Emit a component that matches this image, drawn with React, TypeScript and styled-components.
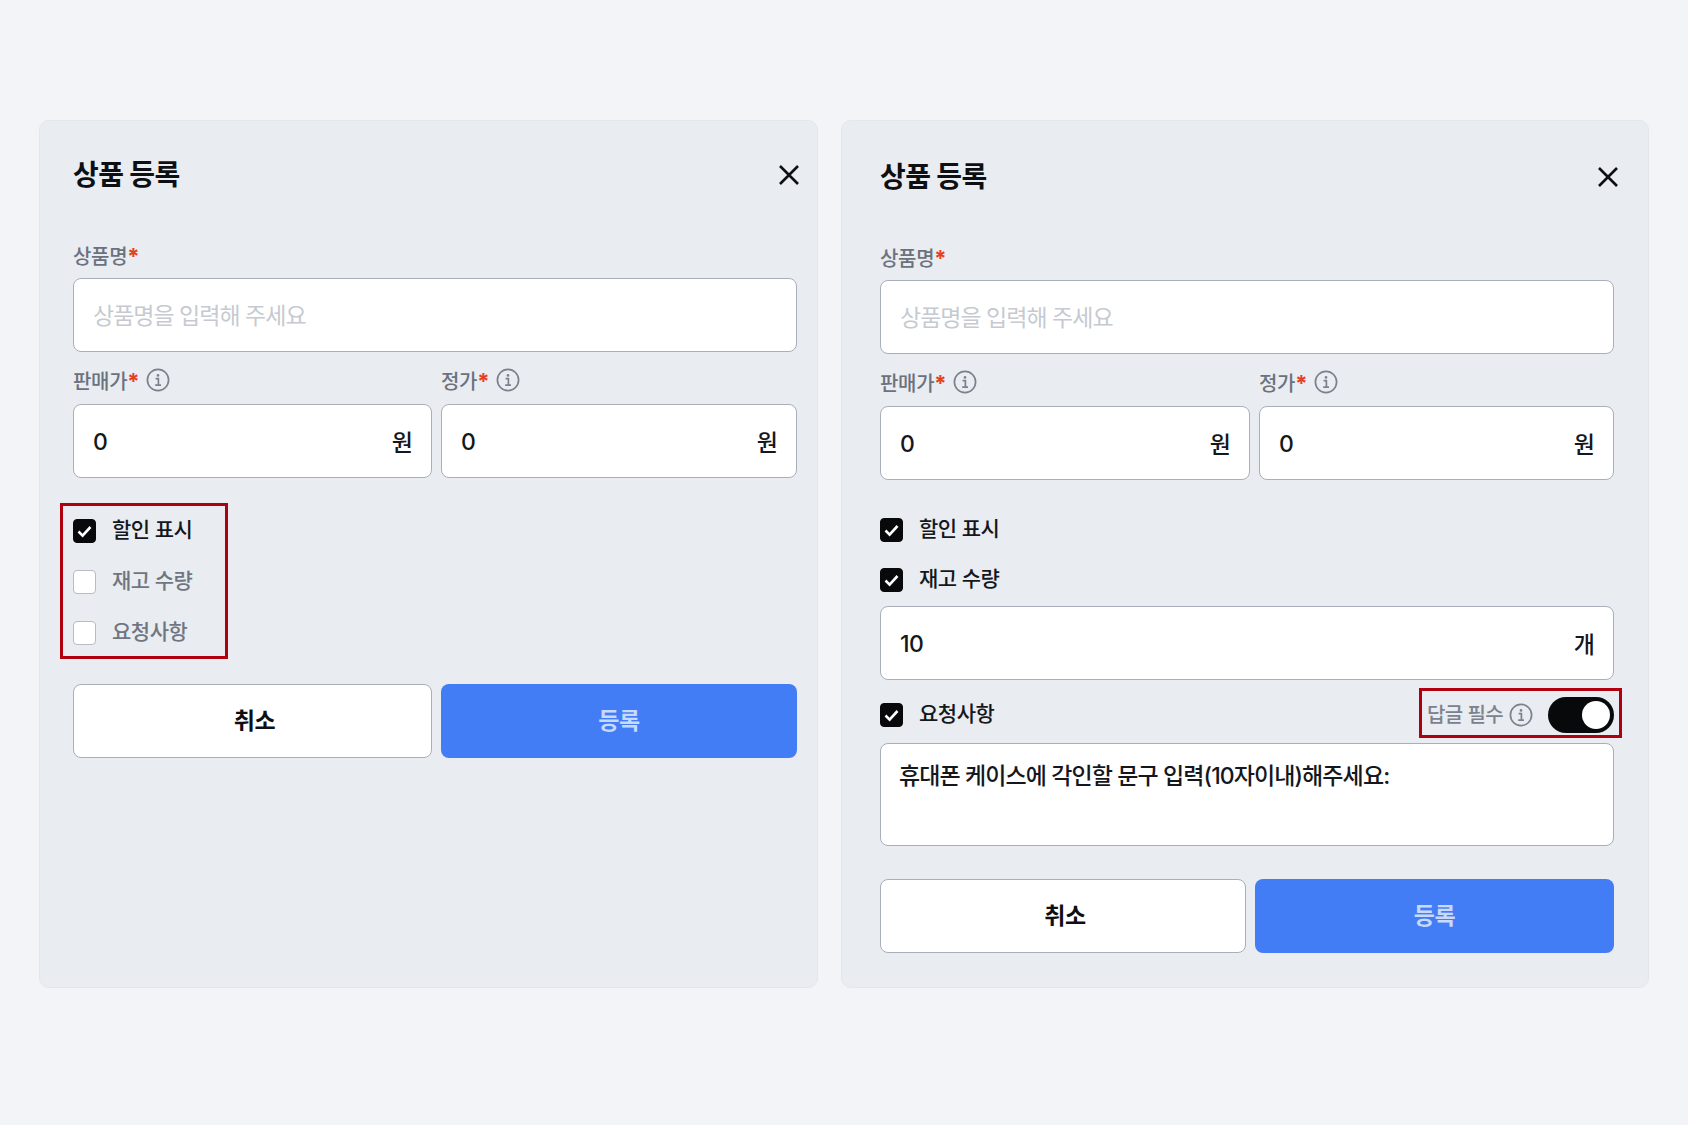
import React from 'react';
import styled, { createGlobalStyle } from 'styled-components';

const GlobalStyle = createGlobalStyle`
    * {
        box-sizing: border-box;
    }

    body {
        margin: 0;
        background: #f2f4f7;
        font-family: Inter, 'Noto Sans CJK KR', sans-serif;
    }
`;

const Page = styled.div`
    display: flex;
    align-items: flex-start;
    gap: 23px;
    width: 1688px;
    height: 1125px;
    padding: 120px 40px 0 39px;
    overflow: hidden;
`;

const Card = styled.section<{ $width: number; $top: number; $left: number; $right: number }>`
    width: ${(p) => p.$width}px;
    height: 868px;
    padding: ${(p) => p.$top}px ${(p) => p.$right}px 0 ${(p) => p.$left}px;
    flex: none;
    background: #e9ecf0;
    border: 1px solid #e3e6ea;
    border-radius: 10px;
`;

const Header = styled.div`
    display: flex;
    align-items: center;
    justify-content: space-between;
    height: 42px;
    margin-bottom: 46px;
`;

const Title = styled.h2`
    margin: 0 0 4px;
    font-size: 28px;
    font-weight: 700;
    letter-spacing: -0.6px;
    color: #0d0f12;
`;

const CloseButton = styled.button<{ $out: number }>`
    display: flex;
    padding: 0;
    margin-right: -${(p) => p.$out}px;
    background: none;
    border: none;
    color: #0d0f12;
`;

const FieldLabel = styled.div`
    display: flex;
    align-items: center;
    gap: 7px;
    height: 26px;
    margin-bottom: 10px;
    font-size: 20px;
    font-weight: 500;
    letter-spacing: -0.3px;
    color: #6b727e;
`;

const Required = styled.span`
    color: #e5401d;
    font-size: 22px;
    font-weight: 700;
    line-height: 1;
`;

const InfoMark = styled.svg`
    flex: none;
    width: 24px;
    height: 24px;
    color: #7b828e;
`;

const InputBox = styled.div`
    display: flex;
    align-items: center;
    height: 74px;
    padding: 0 18px 0 19px;
    background: #fff;
    border: 1.5px solid #a8afba;
    border-radius: 8px;
`;

const TextInput = styled.input`
    flex: 1;
    min-width: 0;
    padding: 2px 0 0;
    background: none;
    border: none;
    outline: none;
    font: inherit;
    font-size: 23px;
    font-weight: 500;
    letter-spacing: -0.6px;
    color: #14171c;

    &::placeholder {
        color: #c6cad0;
        font-weight: 400;
        letter-spacing: -1px;
        opacity: 1;
    }
`;

const Unit = styled.span`
    font-size: 23px;
    font-weight: 500;
    color: #14171c;
`;

const Columns = styled.div<{ $first: number }>`
    display: grid;
    grid-template-columns: ${(p) => p.$first}px minmax(0, 1fr);
    column-gap: 9px;
`;

const PriceRow = styled(Columns)`
    margin-top: 16px;

    ${FieldLabel} {
        margin: -1px 0 11px;
    }
`;

const Actions = styled(Columns)<{ $gap: number }>`
    margin-top: ${(p) => p.$gap}px;
`;

const CancelButton = styled.button`
    height: 74px;
    padding: 0 0 4px 4px;
    background: #fff;
    border: 1.5px solid #a8afba;
    border-radius: 8px;
    font: inherit;
    font-size: 23px;
    font-weight: 700;
    letter-spacing: -0.5px;
    color: #0d0f12;
`;

const SubmitButton = styled.button`
    height: 74px;
    padding: 0 0 4px;
    background: #437df5;
    border: none;
    border-radius: 8px;
    font: inherit;
    font-size: 23px;
    font-weight: 700;
    letter-spacing: -0.5px;
    color: #c7d9fc;
`;

const CheckList = styled.div`
    display: flex;
    flex-direction: column;
    gap: 27px;
    width: 168px;
    margin: 25px 0 0 -13px;
    padding: 13px 0 11px 10px;
    border: 3px solid #b0000f;
`;

const CheckRow = styled.label<{ $top?: number }>`
    display: flex;
    align-items: center;
    gap: 16px;
    height: 24px;
    margin-top: ${(p) => p.$top ?? 0}px;
`;

const CheckBox = styled.span<{ $on?: boolean }>`
    display: flex;
    align-items: center;
    justify-content: center;
    flex: none;
    width: 23px;
    height: 24px;
    background: ${(p) => (p.$on ? '#08090b' : '#fff')};
    border: 1.5px solid ${(p) => (p.$on ? '#08090b' : '#b6bbc4')};
    border-radius: 4px;
    color: #fff;
`;

const CheckText = styled.span<{ $on?: boolean }>`
    margin-top: -6px;
    font-size: 21px;
    font-weight: 500;
    letter-spacing: -0.5px;
    color: ${(p) => (p.$on ? '#14171c' : '#6f7682')};
`;

const StockBox = styled(InputBox)`
    margin-top: 14px;
`;

const RequestRow = styled.div`
    display: flex;
    align-items: center;
    justify-content: space-between;
    height: 50px;
    margin-top: 8px;
`;

const ReplyGroup = styled.div`
    display: flex;
    align-items: center;
    height: 50px;
    margin-right: -8px;
    padding: 4px 5px 0;
    border: 3px solid #b0000f;
`;

const ReplyText = styled.span`
    margin: -4px 6px 0 0;
    font-size: 20px;
    font-weight: 500;
    letter-spacing: -0.6px;
    color: #7b828e;
`;

const Toggle = styled.span`
    display: flex;
    justify-content: flex-end;
    align-items: center;
    width: 66px;
    height: 36px;
    margin-left: 15px;
    padding-right: 4px;
    background: #08090b;
    border-radius: 18px;
`;

const Knob = styled.span`
    width: 28px;
    height: 28px;
    background: #fff;
    border-radius: 50%;
`;

const Notes = styled.textarea`
    display: block;
    width: 100%;
    height: 103px;
    margin-top: 5px;
    padding: 17px 18px;
    background: #fff;
    border: 1.5px solid #a8afba;
    border-radius: 8px;
    outline: none;
    resize: none;
    font: inherit;
    font-size: 23px;
    font-weight: 500;
    line-height: 30px;
    letter-spacing: -0.9px;
    color: #14171c;
`;

const InfoIcon = () => (
    <InfoMark viewBox="0 0 24 24" fill="none" stroke="currentColor" strokeWidth="1.7">
        <circle cx="12" cy="12" r="10.6" />
        <circle cx="12" cy="7.4" r="1.3" fill="currentColor" stroke="none" />
        <path d="M9.6 10.7H12.4V17M9.2 17.2H15" />
    </InfoMark>
);

const CloseIcon = () => (
    <svg width="24" height="24" viewBox="0 0 24 24" fill="none" stroke="currentColor" strokeWidth="2.6">
        <path d="M3 3L21 21M21 3L3 21" />
    </svg>
);

const Check = ({ on }: { on?: boolean }) => (
    <CheckBox $on={on}>
        {on && (
            <svg width="15" height="13" viewBox="0 0 15 13" fill="none" stroke="currentColor" strokeWidth="2.6">
                <path d="M1.5 6.5L5.6 10.6L13.5 2" />
            </svg>
        )}
    </CheckBox>
);

const Heading = ({ closeOut }: { closeOut: number }) => (
    <Header>
        <Title>상품 등록</Title>
        <CloseButton $out={closeOut}>
            <CloseIcon />
        </CloseButton>
    </Header>
);

const NameField = () => (
    <>
        <FieldLabel>
            <span>
                상품명<Required>*</Required>
            </span>
        </FieldLabel>
        <InputBox>
            <TextInput placeholder="상품명을 입력해 주세요" />
        </InputBox>
    </>
);

const PriceFields = ({ first }: { first: number }) => (
    <PriceRow $first={first}>
        {['판매가', '정가'].map((name) => (
            <div key={name}>
                <FieldLabel>
                    <span>
                        {name}
                        <Required>*</Required>
                    </span>
                    <InfoIcon />
                </FieldLabel>
                <InputBox>
                    <TextInput defaultValue="0" />
                    <Unit>원</Unit>
                </InputBox>
            </div>
        ))}
    </PriceRow>
);

const App = () => (
    <>
        <GlobalStyle />
        <Page>
            <Card $width={779} $top={33} $left={33} $right={20}>
                <Heading closeOut={4} />
                <NameField />
                <PriceFields first={359} />
                <CheckList>
                    <CheckRow>
                        <Check on />
                        <CheckText $on>할인 표시</CheckText>
                    </CheckRow>
                    <CheckRow>
                        <Check />
                        <CheckText>재고 수량</CheckText>
                    </CheckRow>
                    <CheckRow>
                        <Check />
                        <CheckText>요청사항</CheckText>
                    </CheckRow>
                </CheckList>
                <Actions $first={359} $gap={25}>
                    <CancelButton>취소</CancelButton>
                    <SubmitButton>등록</SubmitButton>
                </Actions>
            </Card>
            <Card $width={808} $top={35} $left={38} $right={34}>
                <Heading closeOut={6} />
                <NameField />
                <PriceFields first={370} />
                <CheckRow $top={38}>
                    <Check on />
                    <CheckText $on>할인 표시</CheckText>
                </CheckRow>
                <CheckRow $top={26}>
                    <Check on />
                    <CheckText $on>재고 수량</CheckText>
                </CheckRow>
                <StockBox>
                    <TextInput defaultValue="10" />
                    <Unit>개</Unit>
                </StockBox>
                <RequestRow>
                    <CheckRow $top={4}>
                        <Check on />
                        <CheckText $on>요청사항</CheckText>
                    </CheckRow>
                    <ReplyGroup>
                        <ReplyText>답글 필수</ReplyText>
                        <InfoIcon />
                        <Toggle>
                            <Knob />
                        </Toggle>
                    </ReplyGroup>
                </RequestRow>
                <Notes defaultValue="휴대폰 케이스에 각인할 문구 입력(10자이내)해주세요:" />
                <Actions $first={366} $gap={33}>
                    <CancelButton>취소</CancelButton>
                    <SubmitButton>등록</SubmitButton>
                </Actions>
            </Card>
        </Page>
    </>
);

export default App;
